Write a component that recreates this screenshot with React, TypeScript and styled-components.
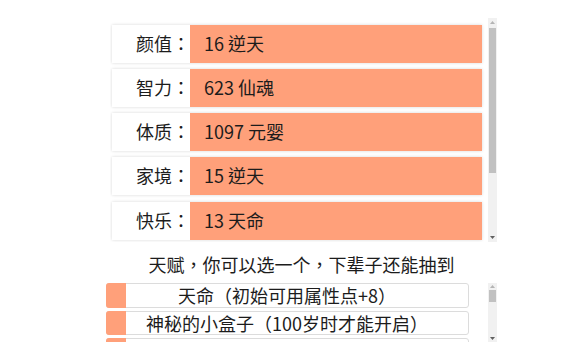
import React from "react";
import styled, { createGlobalStyle } from "styled-components";

const GlobalStyle = createGlobalStyle`
  html, body {
    margin: 0;
    padding: 0;
    background: #ffffff;
  }
  body {
    font-family: "Noto Sans CJK TC", "Noto Sans CJK SC", "Noto Sans", sans-serif;
    color: #1c1c1c;
  }
`;

const Page = styled.div`
  padding-top: 18px;
  display: flex;
  flex-direction: column;
`;

const TopPanel = styled.div`
  margin-left: 110px;
  width: 387px;
  height: 224px;
  display: flex;
`;

const CardList = styled.div`
  width: 378px;
  overflow: hidden;
  padding: 6.5px 6px 0 2px;
  box-sizing: border-box;
  display: flex;
  flex-direction: column;
  gap: 6.3px;
`;

const Card = styled.div`
  flex-shrink: 0;
  height: 38px;
  display: flex;
  background: #ffffff;
  box-shadow: 0 0 3px rgba(0, 0, 0, 0.16);
`;

const Label = styled.div`
  width: 78px;
  text-align: right;
  font-size: 18px;
  line-height: 36px;
  white-space: nowrap;
`;

const Value = styled.div`
  flex: 1;
  background: #ffa07a;
  padding-left: 14px;
  font-size: 18px;
  line-height: 36px;
  white-space: nowrap;
`;

const Heading = styled.div`
  margin-left: 106px;
  width: 391px;
  padding-top: 3px;
  height: 38px;
  line-height: 38px;
  text-align: center;
  font-size: 18px;
  white-space: nowrap;
`;

const BottomPanel = styled.div`
  margin-left: 106px;
  width: 391px;
  height: 59px;
  display: flex;
`;

const OptionList = styled.div`
  width: 363px;
  margin-right: 19px;
  overflow: hidden;
  display: flex;
  flex-direction: column;
  gap: 3px;
`;

const Option = styled.div`
  flex-shrink: 0;
  height: 24.5px;
  box-sizing: border-box;
  border: 1px solid #dcdcdc;
  border-radius: 3px;
  display: flex;
`;

const Swatch = styled.div`
  width: 20px;
  margin: -1px 0 -1px -1px;
  background: #ffa07a;
  border-radius: 3px 0 0 3px;
`;

const OptionText = styled.div`
  flex: 1;
  margin-right: 20px;
  text-align: center;
  font-size: 18px;
  line-height: 22px;
  white-space: nowrap;
`;

const Track = styled.div`
  width: 9px;
  height: 100%;
  background: #f1f1f1;
  display: flex;
  flex-direction: column;
  align-items: center;
`;

const ArrowBox = styled.div<{ $h: number }>`
  height: ${(p) => p.$h}px;
  width: 100%;
  display: flex;
  align-items: center;
  justify-content: center;
  flex-shrink: 0;
`;

const Gap = styled.div<{ $h: number }>`
  height: ${(p) => p.$h}px;
  flex-shrink: 0;
`;

const Thumb = styled.div<{ $h: number }>`
  width: 7px;
  height: ${(p) => p.$h}px;
  background: #c1c1c1;
  flex-shrink: 0;
`;

const Filler = styled.div`
  flex: 1;
`;

const Arrow = ({ up, color }: { up?: boolean; color: string }) => (
  <svg width="5" height="3" viewBox="0 0 5 3">
    {up ? (
      <polygon points="2.5,0 5,3 0,3" fill={color} />
    ) : (
      <polygon points="0,0 5,0 2.5,3" fill={color} />
    )}
  </svg>
);

const Scrollbar = ({
  arrow,
  thumbTop,
  thumb,
}: {
  arrow: number;
  thumbTop: number;
  thumb: number;
}) => (
  <Track>
    <ArrowBox $h={arrow}>
      <Arrow up color="#b4b4b4" />
    </ArrowBox>
    <Gap $h={thumbTop} />
    <Thumb $h={thumb} />
    <Filler />
    <ArrowBox $h={arrow}>
      <Arrow color="#606060" />
    </ArrowBox>
  </Track>
);

const stats = [
  { label: "颜值：", value: "16 逆天" },
  { label: "智力：", value: "623 仙魂" },
  { label: "体质：", value: "1097 元婴" },
  { label: "家境：", value: "15 逆天" },
  { label: "快乐：", value: "13 天命" },
];

const talents = [
  "天命（初始可用属性点+8）",
  "神秘的小盒子（100岁时才能开启）",
  "",
];

export default function App() {
  return (
    <>
      <GlobalStyle />
      <Page>
        <TopPanel>
          <CardList>
            {stats.map((s) => (
              <Card key={s.label}>
                <Label>{s.label}</Label>
                <Value>{s.value}</Value>
              </Card>
            ))}
          </CardList>
          <Scrollbar arrow={9} thumbTop={1} thumb={145} />
        </TopPanel>
        <Heading>天赋，你可以选一个，下辈子还能抽到</Heading>
        <BottomPanel>
          <OptionList>
            {talents.map((t, i) => (
              <Option key={i}>
                <Swatch />
                <OptionText>{t}</OptionText>
              </Option>
            ))}
          </OptionList>
          <Scrollbar arrow={7} thumbTop={0} thumb={12} />
        </BottomPanel>
      </Page>
    </>
  );
}
